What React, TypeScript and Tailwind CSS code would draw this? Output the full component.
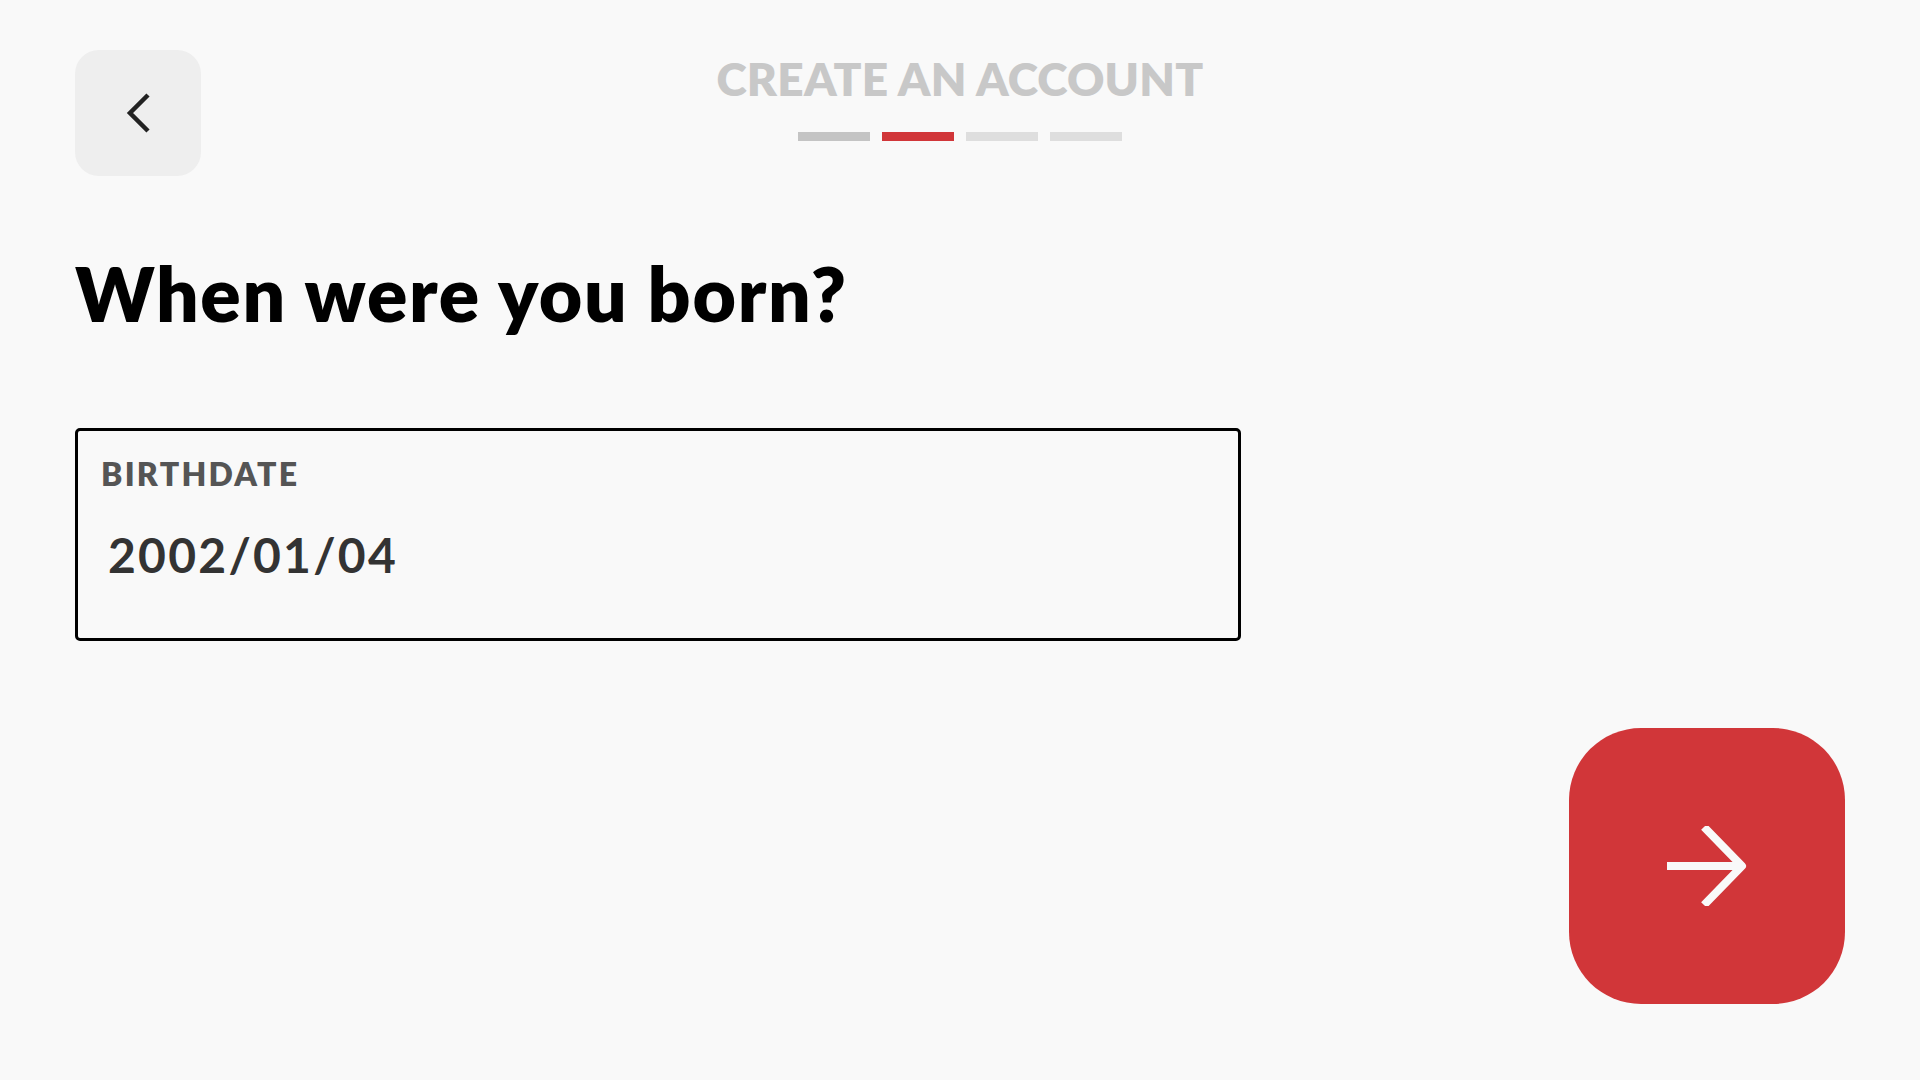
import React from 'react';

const steps = ['bg-[#c4c4c4]', 'bg-[#d13639]', 'bg-[#dedede]', 'bg-[#dedede]'];

const App = () => {
  return (
    <div className="h-screen w-full bg-[#f9f9f9] flex flex-col px-[75px] pt-[50px] pb-[76px] font-['Lato','Liberation_Sans',sans-serif] text-black">
      {/* Header */}
      <div className="grid grid-cols-[1fr_auto_1fr] items-start">
        <button className="w-[126px] h-[126px] rounded-[24px] bg-[#eeeeee] flex items-center justify-center">
          <svg width="24" height="40" viewBox="0 0 24 40" fill="none">
            <polyline points="22,2 4,20 22,38" stroke="#222" strokeWidth="4.5" />
          </svg>
        </button>
        <div className="flex flex-col items-center">
          <h2 className="mt-[6px] text-[46px] leading-none font-extrabold tracking-[0.005em] text-[#c8c8c8] uppercase">
            Create an account
          </h2>
          <div className="mt-[30px] flex gap-[12px]">
            {steps.map((c, i) => (
              <div key={i} className={`w-[72px] h-[9px] ${c}`} />
            ))}
          </div>
        </div>
        <div />
      </div>

      {/* Question */}
      <h1 className="mt-[80px] text-[75px] leading-none font-extrabold tracking-[0.023em]">When were you born?</h1>

      {/* Birthdate field */}
      <div className="mt-[97px] w-[1166px] h-[213px] border-[3px] border-black rounded-[5px] pl-[23px] pt-[27px]">
        <div className="text-[32px] leading-none font-extrabold tracking-[0.07em] text-[#555555] uppercase">Birthdate</div>
        <div className="mt-[41px] pl-[7px] text-[48px] leading-none font-bold tracking-[0.047em] text-[#333333]">2002/01/04</div>
      </div>

      {/* Next */}
      <div className="mt-auto flex justify-end">
        <button className="w-[276px] h-[276px] rounded-[72px] bg-[#d13639] flex items-center justify-center">
          <svg width="80" height="80" viewBox="0 0 80 80" fill="none">
            <line x1="0" y1="40" x2="76" y2="40" stroke="#f9f9f9" strokeWidth="8" />
            <polyline points="37,1 75,40 37,79" stroke="#f9f9f9" strokeWidth="8" strokeLinejoin="round" />
          </svg>
        </button>
      </div>
    </div>
  );
};

export default App;
